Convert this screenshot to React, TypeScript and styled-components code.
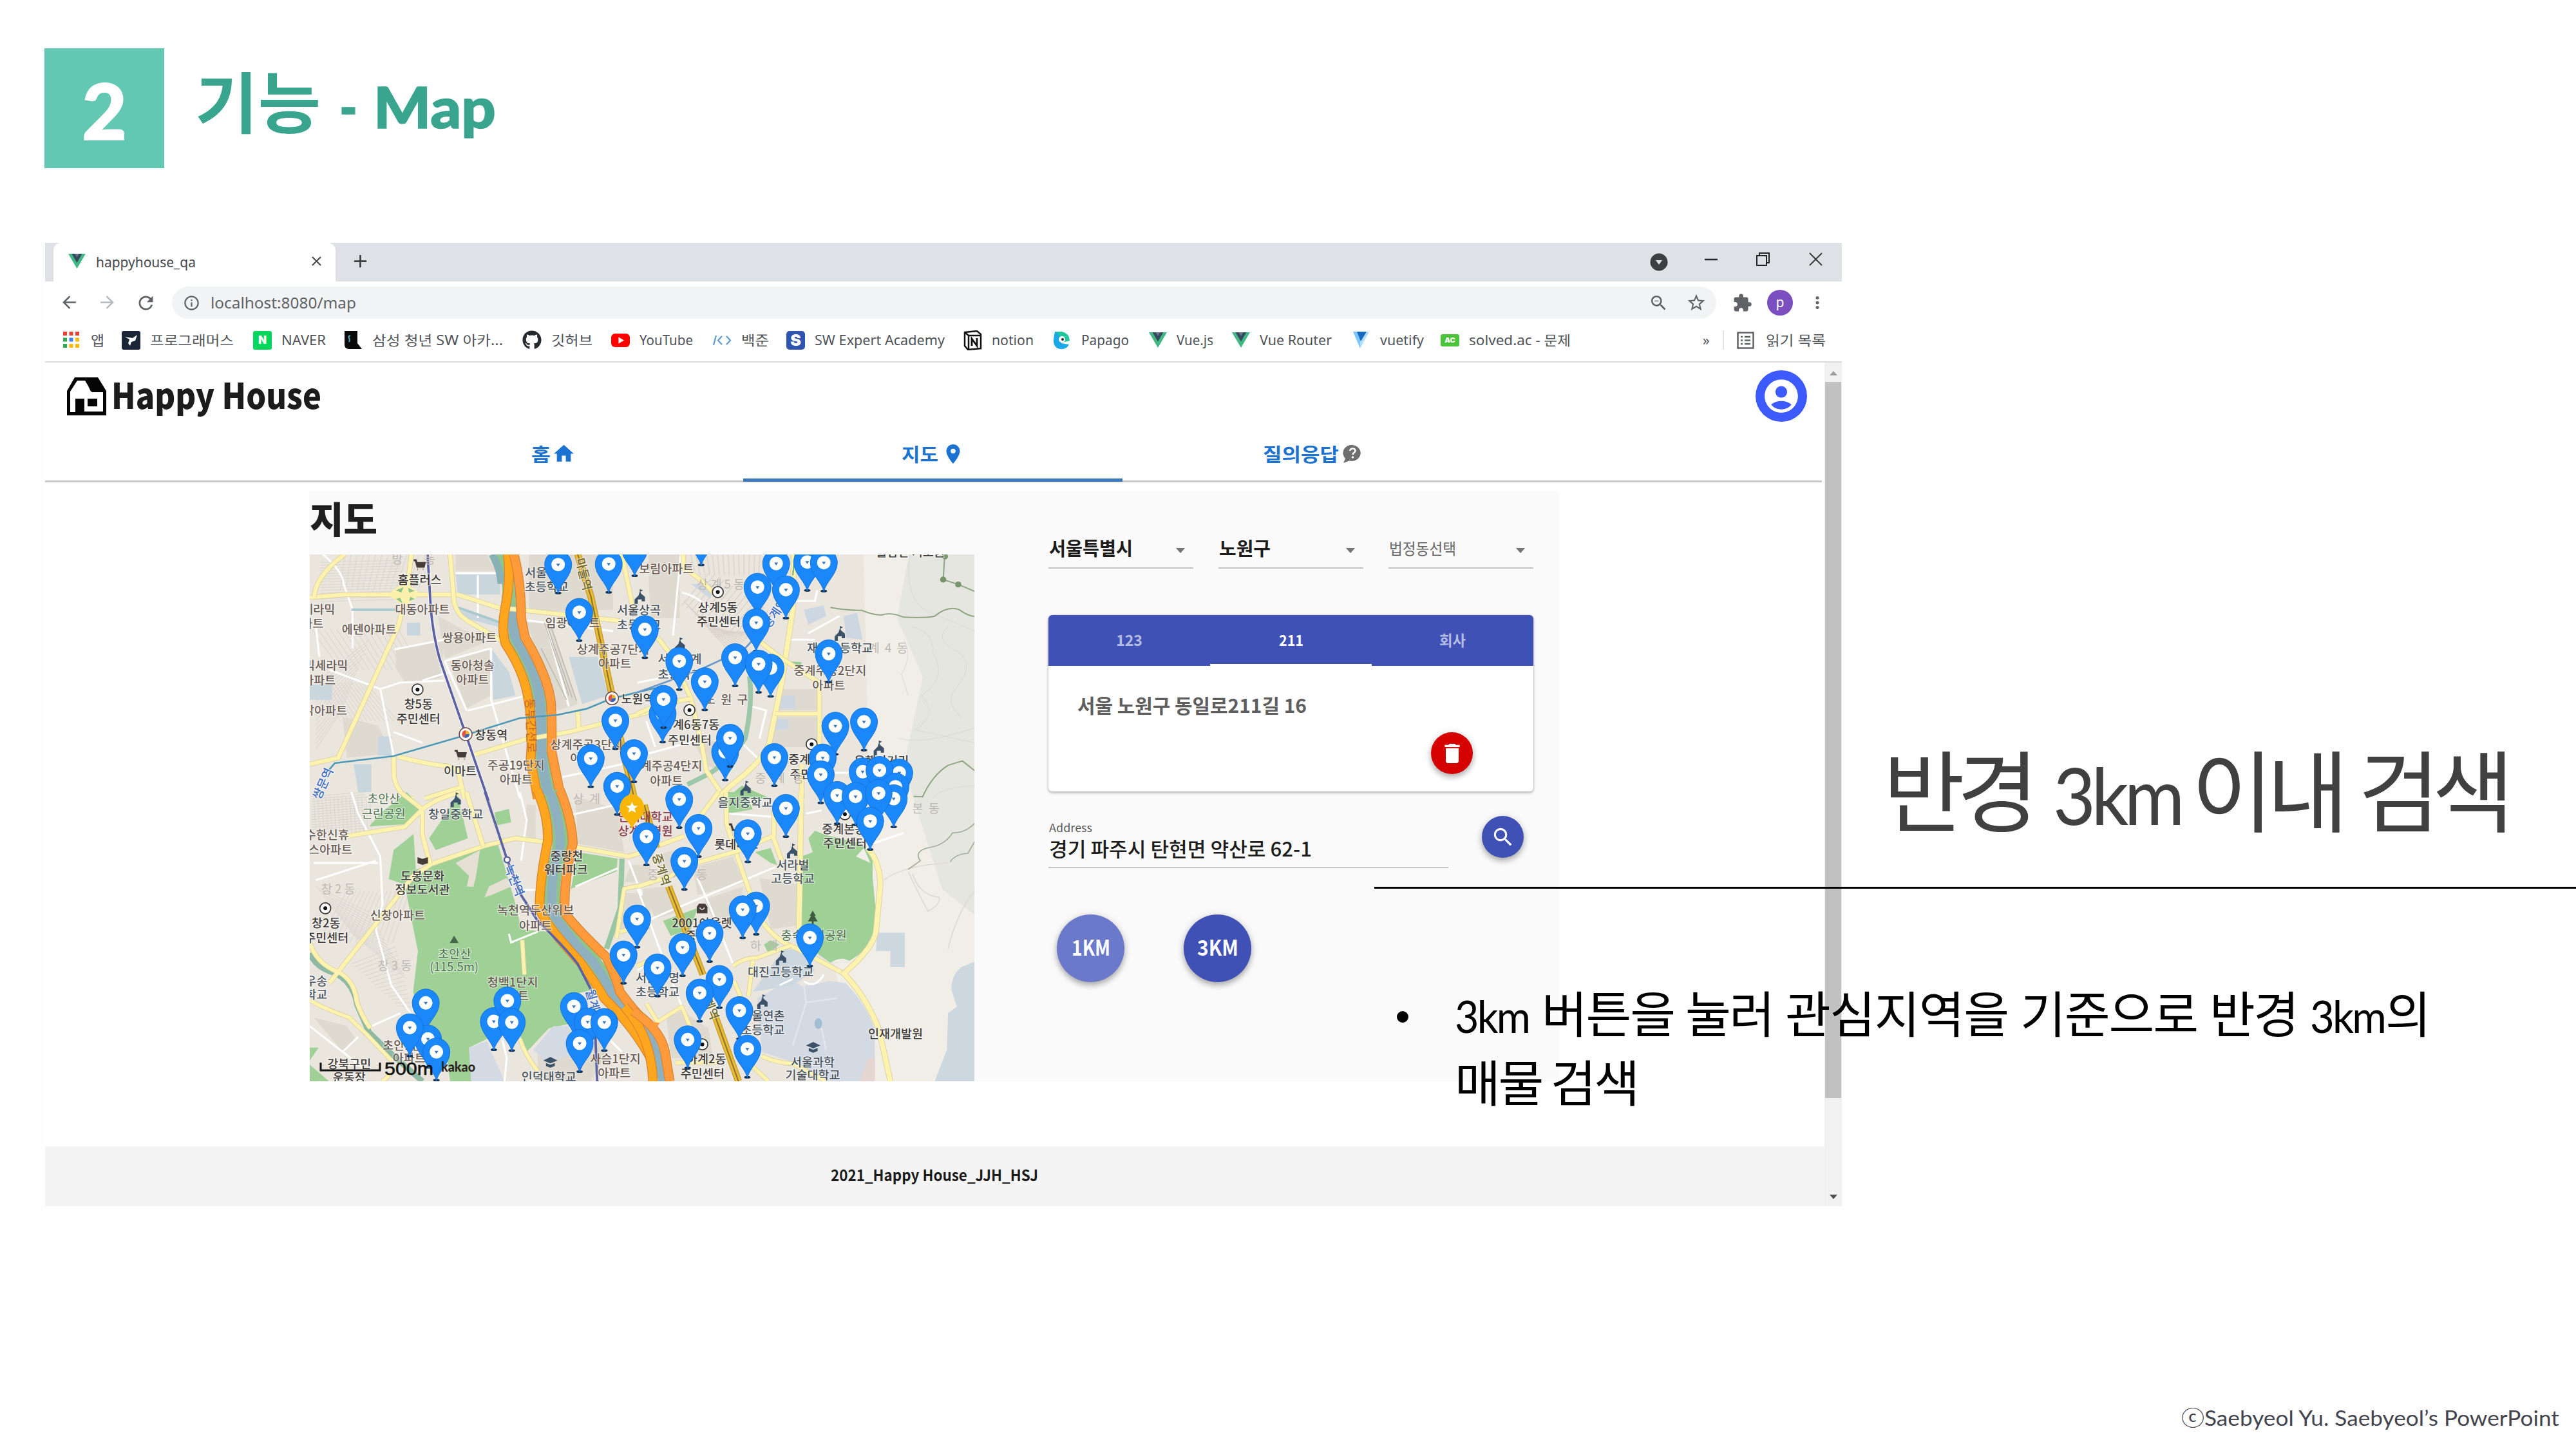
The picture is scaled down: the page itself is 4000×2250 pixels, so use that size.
import React, { useLayoutEffect, useRef, useState } from "react";
import styled, { createGlobalStyle, css } from "styled-components";
import {
  MdAccountCircle, MdAdd, MdArrowBack, MdArrowForward, MdClose, MdDelete, MdExtension, MdHome,
  MdInfoOutline, MdMoreVert, MdPlace, MdRefresh, MdSearch, MdStarBorder, MdZoomOut,
} from "react-icons/md";
import { FaGithub } from "react-icons/fa";

const KR = `"Noto Sans CJK KR", sans-serif`;
const LATIN = `Lato, "Noto Sans CJK KR", sans-serif`;
const CHROME = `"Noto Sans", "Noto Sans CJK KR", sans-serif`;
const INDIGO = "#3f51b5";

const GlobalStyle = createGlobalStyle`
  *, *::before, *::after { box-sizing: border-box; }
  html, body { margin: 0; padding: 0; background: #fff; }
  body { width: 4000px; height: 2250px; overflow: hidden; font-family: ${KR}; }
  svg { display: block; flex: none; }
`;

/* ---------- text that fills a given width ---------- */

const FitBox = styled.span<{ $w: number }>`
  display: inline-block;
  flex: none;
  width: ${(p) => p.$w}px;
  white-space: nowrap;
`;
const FitInner = styled.span`
  display: inline-block;
  white-space: pre;
  transform-origin: 0 50%;
`;

function Fit({ w, spaced, children }: { w: number; spaced?: boolean; children: string }) {
  const ref = useRef<HTMLSpanElement>(null);
  const [natural, setNatural] = useState(0);
  useLayoutEffect(() => {
    if (ref.current && !natural) setNatural(ref.current.getBoundingClientRect().width);
  }, [natural]);
  let style: React.CSSProperties = {};
  if (natural) {
    style = spaced
      ? { letterSpacing: `${(w - natural) / Math.max(1, children.length - 1)}px` }
      : { transform: `scaleX(${w / natural})` };
  }
  return (
    <FitBox $w={w}>
      <FitInner ref={ref} style={style}>{children}</FitInner>
    </FitBox>
  );
}

/* ---------- slide ---------- */

const Slide = styled.div`
  position: relative;
  width: 4000px;
  height: 2250px;
  overflow: hidden;
  background: #fefefe;
`;
const SlideHeader = styled.header`
  display: flex;
  height: 377px;
  padding: 75px 0 0 69px;
`;
const NumberBox = styled.div`
  display: flex;
  align-items: center;
  justify-content: center;
  width: 186px;
  height: 186px;
  padding-top: 5px;
  background: #62c8b3;
  color: #fff;
  font: 900 120px/1 ${LATIN};
  -webkit-text-stroke: 2px #fff;
`;
const SlideTitle = styled.h1`
  display: flex;
  align-items: baseline;
  height: 186px;
  margin: 0 0 0 48px;
  color: #3aa58f;
  font: 700 103px/1 ${KR};
  line-height: 160px;
`;
const TitleLatin = styled.span`
  display: flex;
  gap: 25px;
  margin-left: 29px;
  font: 900 88px/1 ${LATIN};
  -webkit-text-stroke: 1.5px #3aa58f;
`;

/* ---------- browser ---------- */

const Browser = styled.section`
  width: 2790px;
  height: 1496px;
  margin-left: 70px;
  display: flex;
  flex-direction: column;
  background: #fff;
`;
const TabStrip = styled.div`
  display: flex;
  align-items: center;
  height: 60px;
  padding-left: 13px;
  background: #dee1e6;
`;
const BrowserTab = styled.div`
  display: flex;
  align-items: center;
  width: 438px;
  height: 60px;
  padding: 0 17px 3px 23px;
  border-radius: 12px 12px 0 0;
  background: #fff;
  color: #45484c;
  font: 400 22px/1 ${CHROME};
`;
const TabLabel = styled.div`
  flex: 1;
  padding-left: 16px;
`;
const NewTab = styled.div`
  display: flex;
  flex: 1;
  padding: 0 0 3px 22px;
  color: #3c4043;
`;
const WindowControls = styled.div`
  display: flex;
  align-items: center;
  gap: 60px;
  padding: 0 29px 8px 0;

  svg:first-child { margin: 8px -3px 0 0; }
`;
const Toolbar = styled.div`
  display: flex;
  align-items: center;
  height: 66px;
  padding: 0 23px 0 22px;
  color: #5f6368;
`;
const NavIcons = styled.div`
  display: flex;
  gap: 28px;
  width: 175px;
`;
const Omnibox = styled.div`
  display: flex;
  align-items: center;
  width: 2398px;
  height: 50px;
  padding: 0 15px 0 17px;
  border-radius: 25px;
  background: #f1f3f4;
  font: 400 24px/1 ${CHROME};
`;
const Url = styled.div`
  flex: 1;
  padding-left: 16px;
  color: #5f6368;
`;
const StarGap = styled.div`
  padding-left: 27px;
`;
const ToolbarRight = styled.div`
  display: flex;
  flex: 1;
  align-items: center;
  justify-content: flex-end;
  gap: 23px;
`;
const Profile = styled.div`
  width: 40px;
  height: 40px;
  border-radius: 50%;
  background: #7b4fc0;
  color: #fff;
  font: 400 21px/38px ${CHROME};
  text-align: center;
`;
const Bookmarks = styled.div`
  display: grid;
  grid-template-columns: 92px 204px 141px 277px 138px 158px 114px 275px 139px 149px 129px 186px 138px 407px 31px 1fr;
  align-items: center;
  height: 60px;
  padding: 0 0 8px 27px;
  border-bottom: 2px solid #dcdcdc;
  color: #505357;
  font: 400 21px/30px ${CHROME};
`;
const Bookmark = styled.div`
  display: flex;
  align-items: center;
  gap: 15px;
`;
const ReadingList = styled(Bookmark)`
  gap: 18px;
  padding-left: 20px;
  border-left: 2px solid #e2e3e5;
`;
const Tile = styled.div<{ $bg: string; $r?: number; $h?: number; $fs?: number }>`
  width: 29px;
  height: ${(p) => p.$h ?? 29}px;
  border-radius: ${(p) => p.$r ?? 3}px;
  background: ${(p) => p.$bg};
  color: #fff;
  font: 900 ${(p) => p.$fs ?? 20}px/${(p) => p.$h ?? 29}px Inter, sans-serif;
  text-align: center;
`;

/* ---------- web page ---------- */

const Viewport = styled.div`
  display: flex;
  flex: 1;
`;
const Page = styled.div`
  display: flex;
  flex-direction: column;
  width: 2763px;
  background: #fff;
`;
const Scrollbar = styled.div`
  display: flex;
  flex-direction: column;
  align-items: center;
  width: 27px;
  background: #f1f1f1;
`;
const Arrow = styled.div<{ $down?: boolean }>`
  margin: ${(p) => (p.$down ? "150px 0 0" : "13px 0 10px")};
  border: 6px solid transparent;
  ${(p) =>
    p.$down
      ? css`border-top: 7px solid #505050; border-bottom: 0;`
      : css`border-bottom: 7px solid #a0a0a0; border-top: 0;`}
`;
const Thumb = styled.div`
  width: 25px;
  height: 1112px;
  background: #c1c1c1;
`;
const AppBar = styled.header`
  height: 186px;
  width: 2759px;
  border-bottom: 3px solid #c9c9c9;
`;
const LogoRow = styled.div`
  display: flex;
  align-items: center;
  justify-content: space-between;
  height: 94px;
  padding: 10px 23px 0 33px;
`;
const Logo = styled.div`
  display: flex;
  align-items: center;
  gap: 8px;
  color: #1c1c1c;
  font: 900 55px/60px ${KR};
`;
const LogoWord = styled.div`
  padding-bottom: 9px;
`;
const UserBadge = styled.div`
  display: flex;
  align-items: center;
  justify-content: center;
  width: 80px;
  height: 80px;
  border-radius: 50%;
  background: #3d5afe;
  color: #fff;
`;
const AppTabs = styled.nav`
  display: grid;
  grid-template-columns: repeat(3, 589px);
  height: 91px;
  padding-left: 495px;
  color: #1b72d0;
  font: 700 29px/1 ${KR};
`;
const AppTab = styled.div<{ $active?: boolean; $gap?: number }>`
  position: relative;
  display: flex;
  align-items: center;
  justify-content: center;
  gap: ${(p) => p.$gap ?? 5}px;
  padding-top: 9px;
  border-bottom: 5px solid ${(p) => (p.$active ? "#3a78bd" : "transparent")};
`;
const Panel = styled.main`
  display: flex;
  width: 1941px;
  height: 917px;
  margin: 13px 0 0 410px;
  background: #fafafa;
`;
const MapColumn = styled.div`
  width: 1033px;
  padding-left: 1px;
`;
const MapTitle = styled.h2`
  height: 99px;
  margin: 0;
  padding-top: 12px;
  color: #1f1f1f;
  font: 900 57px/58px ${KR};
`;
const Controls = styled.div`
  width: 753px;
  margin-left: 115px;
  padding-top: 68px;
`;
const SelectRow = styled.div`
  display: flex;
  justify-content: space-between;
`;
const Select = styled.div<{ $muted?: boolean }>`
  display: flex;
  align-items: center;
  justify-content: space-between;
  width: 225px;
  height: 53px;
  padding: 0 13px 10px 1px;
  border-bottom: 2px solid #c4c4c4;
  color: ${(p) => (p.$muted ? "#666" : "#1c1c1c")};
  font: ${(p) => (p.$muted ? "400 24px" : "700 29px")}/1 ${KR};
`;
const Caret = styled.div`
  margin-top: 9px;
  border: 7px solid transparent;
  border-top: 8px solid #757575;
  border-bottom: 0;
`;
const Card = styled.div`
  width: 753px;
  height: 274px;
  margin-top: 72px;
  border-radius: 6px;
  background: #fff;
  box-shadow: 0 2px 4px rgba(0, 0, 0, 0.3), 0 0 3px rgba(0, 0, 0, 0.12);
`;
const CardTabs = styled.div`
  display: grid;
  grid-template-columns: repeat(3, 1fr);
  height: 79px;
  border-radius: 6px 6px 0 0;
  background: ${INDIGO};
`;
const CardTab = styled.div<{ $active?: boolean }>`
  display: flex;
  align-items: center;
  justify-content: center;
  border-bottom: 3px solid ${(p) => (p.$active ? "#fff" : "transparent")};
  color: ${(p) => (p.$active ? "#fff" : "#b5bce3")};
  font: 700 23px/1 ${KR};
`;
const CardBody = styled.div`
  display: flex;
  flex-direction: column;
  padding: 42px 0 0 45px;
  color: #5e5e5e;
  font: 700 30px/36px ${KR};
`;
const RoundButton = styled.button<{ $size: number; $bg: string }>`
  display: flex;
  flex: none;
  align-items: center;
  justify-content: center;
  width: ${(p) => p.$size}px;
  height: ${(p) => p.$size}px;
  padding: 0;
  border: 0;
  border-radius: 50%;
  background: ${(p) => p.$bg};
  box-shadow: 0 5px 9px rgba(0, 0, 0, 0.26), 0 1px 14px rgba(0, 0, 0, 0.12);
  color: #fff;
  font: 700 33px/1 ${KR};
`;
const RadiusButton = styled(RoundButton)`
  padding-bottom: 5px;
`;
const DeleteSlot = styled.div`
  margin: 25px 0 0 549px;
`;
const AddressRow = styled.div`
  display: flex;
  justify-content: space-between;
  margin-top: 38px;
  padding-right: 15px;
`;
const AddressField = styled.div`
  display: flex;
  flex-direction: column;
  width: 621px;
  height: 81px;
  padding: 7px 0 0 1px;
  border-bottom: 2px solid #c4c4c4;
  color: #1c1c1c;
  font: 500 31px/46px ${KR};
`;
const FieldLabel = styled.label`
  height: 20px;
  color: #5a5a5a;
  font: 400 17px/22px ${KR};
`;
const RadiusRow = styled.div`
  display: flex;
  gap: 92px;
  padding: 72px 0 0 13px;
`;
const PageFooter = styled.footer`
  display: flex;
  align-items: center;
  height: 93px;
  margin-top: auto;
  padding: 0 0 5px 1220px;
  background: #f4f4f4;
  color: #1b1b1b;
  font: 700 24px/1 ${KR};
`;

/* ---------- notes laid over the browser ---------- */

const Notes = styled.aside`
  position: absolute;
  left: 2134px;
  top: 1130px;
  width: 1866px;
`;
const Heading = styled.h2`
  display: flex;
  align-items: baseline;
  height: 247px;
  margin: 0;
  padding-left: 790px;
  color: #404040;
  font: 400 138px/182px ${KR};
`;
const HeadPart = styled.span<{ $ml?: number; $latin?: boolean }>`
  margin-left: ${(p) => p.$ml ?? 0}px;
  ${(p) => p.$latin && css`font-family: ${LATIN}; font-size: 123px; letter-spacing: -7px;`}
`;
const Rule = styled.hr`
  height: 3px;
  margin: 0;
  border: 0;
  background: #000;
`;
const Bullets = styled.ul`
  display: flex;
  gap: 72px;
  margin: 0;
  padding: 137px 0 0 35px;
  list-style: none;
  color: #000;
  font: 400 77px/107px ${KR};
`;
const Dot = styled.li`
  width: 18px;
  height: 18px;
  margin-top: 53px;
  border-radius: 50%;
  background: #000;
`;
const BulletText = styled.li`
  display: flex;
  flex-direction: column;
`;
const Line = styled.div`
  display: flex;
  align-items: baseline;
  height: 107px;
`;
const Word = styled.span<{ $ml?: number; $latin?: boolean }>`
  margin-left: ${(p) => p.$ml ?? 0}px;
  ${(p) => p.$latin && css`font-family: ${LATIN}; font-size: 69px; letter-spacing: -3px;`}
`;
const Credit = styled.footer`
  position: absolute;
  left: 3387px;
  top: 2178px;
  display: flex;
  align-items: center;
  color: #44444f;
  font: 400 33px/46px ${LATIN};
`;

/* ---------- small drawings ---------- */

const VueMark = ({ size = 28 }: { size?: number }) => (
  <svg width={size} height={size} viewBox="0 0 28 28">
    <path d="M0 2h28L14 26z" fill="#41b883" />
    <path d="M5.6 2h16.8L14 16.5z" fill="#35495e" />
    <path d="M10.5 2h7L14 8z" fill="#fff" opacity=".25" />
  </svg>
);
const AppsMark = () => (
  <svg width="29" height="29" viewBox="0 0 29 29">
    {["#ea4335", "#ea4335", "#ea4335", "#34a853", "#4285f4", "#fbbc05", "#34a853", "#fbbc05", "#fbbc05"].map((c, i) => (
      <rect key={i} x={1 + (i % 3) * 9.5} y={1 + Math.floor(i / 3) * 9.5} width="6" height="6" fill={c} />
    ))}
  </svg>
);
const ProgrammersMark = () => (
  <svg width="29" height="29" viewBox="0 0 29 29">
    <rect width="29" height="29" rx="3" fill="#1b2538" />
    <path d="M5 9l12 2 7-5-3 9-6 2-2 6-3-4 2-6z" fill="#fff" />
  </svg>
);
const SsafyMark = () => (
  <svg width="29" height="29" viewBox="0 0 29 29">
    <path d="M1 0h20v19l7 9H8q-7 0-7-7z" fill="#0a0a0a" />
    <path d="M10 7q-4 1-2 4t0 6" stroke="#5ab" strokeWidth="2" fill="none" />
  </svg>
);
const YoutubeMark = () => (
  <svg width="29" height="29" viewBox="0 0 29 29">
    <rect y="4" width="29" height="21" rx="6" fill="#f00" />
    <path d="M11.500 9.500v10l8.500-5z" fill="#fff" />
  </svg>
);
const CodeMark = () => (
  <svg width="29" height="29" viewBox="0 0 29 29" fill="none" stroke="#5b9bd5" strokeWidth="2.200">
    <path d="M5 7L1 22M14 8l-6 6.500 6 6.500M21 8l6 6.500-6 6.500" />
  </svg>
);
const NotionMark = () => (
  <svg width="29" height="31" viewBox="0 0 29 31">
    <path d="M2 3l19-2 6 5v22l-20 2-5-6z" fill="#fff" stroke="#111" strokeWidth="2.500" />
    <path d="M2 3l6 5h19M8 8v21" stroke="#111" strokeWidth="2.500" fill="none" />
    <path d="M13 24V13l8 11V12" stroke="#111" strokeWidth="2.800" fill="none" />
  </svg>
);
const PapagoMark = () => (
  <svg width="29" height="29" viewBox="0 0 29 29">
    <path d="M3 1h11q11 2 12 14l-12 3z" fill="#1ec89b" />
    <path d="M3 1q8 3 7 10l3 8 12 2q-4 8-14 7Q0 26 1 12z" fill="#1aa9e8" />
    <circle cx="14" cy="13" r="5" fill="#fff" />
    <circle cx="15" cy="13" r="2" fill="#223" />
  </svg>
);
const VuetifyMark = () => (
  <svg width="29" height="29" viewBox="0 0 29 29">
    <path d="M2 1h11v26z" fill="#7bc6ff" />
    <path d="M13 1h14L13 27z" fill="#aeddff" />
    <path d="M8 1h15l-9 15z" fill="#1867c0" />
  </svg>
);
const ListMark = () => (
  <svg width="27" height="27" viewBox="0 0 27 27" fill="none" stroke="#5f6368" strokeWidth="2.500">
    <rect x="1.500" y="1.500" width="24" height="24" />
    <path d="M6 8h3M6 13.500h3M6 19h3M12 8h9M12 13.500h9M12 19h9" />
  </svg>
);
const HouseLogo = () => (
  <svg width="62" height="61" viewBox="0 0 62 61">
    <path d="M13 1h36l13 21v38H1V22z" fill="#050505" />
    <path d="M17 6L6 23v32h8V34h14v20h29V24H40L29 6z" fill="#fff" />
    <path d="M29 3h19l11 20H38z" fill="#050505" />
    <path d="M14 34h13v22H14z" fill="#050505" />
    <path d="M33 34h15v12H33z" fill="#050505" />
  </svg>
);
const HelpBubble = () => (
  <svg width="31" height="30" viewBox="0 0 31 30">
    <path d="M16 1a14 12.500 0 1 1-5 24.500L2 29l3-7A13 12.500 0 0 1 16 1z" fill="#6f6f6f" />
    <path d="M12 10q1-3.500 4.500-3.500t4 3.200q0 2-2.200 3.400-1.800 1-1.800 2.900" stroke="#fff" strokeWidth="2.600" fill="none" />
    <circle cx="16.500" cy="20" r="1.800" fill="#fff" />
  </svg>
);

/* ---------- map ---------- */

type Quad = "nw" | "ne" | "sw" | "se";
const ORIGIN: Record<Quad, [number, number]> = { nw: [-11, -101], ne: [509, -101], sw: [-11, 369], se: [509, 369] };
const SX = 1 / 2.904;
const SY = 1 / 3;
const at = (q: Quad, x: number, y: number): [number, number] => [x * SX + ORIGIN[q][0], y * SY + ORIGIN[q][1]];

const Sheet = ({ q, children }: { q: Quad; children: React.ReactNode }) => (
  <g transform={`matrix(${SX} 0 0 ${SY} ${ORIGIN[q][0]} ${ORIGIN[q][1]})`}>{children}</g>
);
const Road = ({ d, w = 18 }: { d: string; w?: number }) => (
  <g fill="none" strokeLinejoin="round">
    <path d={d} stroke="#d9cfa0" strokeWidth={w + 5} />
    <path d={d} stroke="#fdf3ae" strokeWidth={w} />
  </g>
);
const Highway = ({ d, c = "#ffa51e", w = 38 }: { d: string; c?: string; w?: number }) => (
  <g fill="none" strokeLinejoin="round">
    <path d={d} stroke="#d98636" strokeWidth={w + 6} />
    <path d={d} stroke={c} strokeWidth={w - 2} />
  </g>
);
const Lane = ({ d }: { d: string }) => (
  <g fill="none">
    <path d={d} stroke="#c99d2c" strokeWidth={32} />
    <path d={d} stroke="#e8bb38" strokeWidth={24} />
    <path d={d} stroke="#8d7426" strokeWidth={6} />
  </g>
);

const PINS: [Quad, number, number][] = [
  ["nw", 1497, 270], ["nw", 1152, 350], ["nw", 1380, 347], ["nw", 1247, 572], ["nw", 1543, 652],
  ["ne", 287, 220], ["ne", 625, 345], ["ne", 765, 338], ["ne", 840, 341], ["ne", 541, 455], ["ne", 669, 467],
  ["ne", 535, 620], ["ne", 440, 783], ["ne", 188, 800], ["ne", 303, 895], ["ne", 600, 832], ["ne", 546, 813],
  ["ne", 862, 765], ["ne", 113, 1045], ["ne", 117, 977], ["nw", 1410, 1076], ["nw", 1299, 1253],
  ["nw", 1418, 1382], ["nw", 1494, 1230], ["ne", 892, 1102], ["ne", 1021, 1082], ["ne", 395, 1222],
  ["ne", 417, 1158], ["ne", 617, 1248], ["ne", 835, 1250], ["ne", 826, 1328], ["ne", 1015, 1315],
  ["ne", 1180, 1320], ["ne", 1091, 1308], ["ne", 1163, 1385], ["ne", 1155, 1440], ["ne", 900, 1425],
  ["ne", 983, 1430], ["ne", 1087, 1415], ["se", 1049, 135],
  ["se", 188, 33], ["se", 669, 75], ["se", 275, 168], ["se", 497, 193], ["se", 211, 321], ["se", 535, 530],
  ["se", 474, 547], ["se", 325, 657], ["se", 203, 723], ["se", 777, 678], ["se", 90, 818], ["se", 369, 872],
  ["se", 280, 935], ["se", 459, 1017], ["se", 495, 1196], ["se", 226, 1153],
  ["sw", 1508, 590], ["sw", 1447, 758], ["sw", 555, 982], ["sw", 565, 1150], ["sw", 483, 1097],
  ["sw", 603, 1210], ["sw", 862, 1068], ["sw", 923, 972], ["sw", 943, 1072], ["sw", 1223, 998],
  ["sw", 1285, 1070], ["sw", 1360, 1072], ["sw", 1249, 1170],
];

const Pin = ({ x, y }: { x: number; y: number }) => (
  <g transform={`translate(${x} ${y})`}>
    <ellipse cx="0" cy="44" rx="5" ry="2" fill="#12304f" />
    <path d="M0 45C-3 30-21 18-21 0a21 21.500 0 0 1 42 0C21 18 3 30 0 45z" fill="#1a87fa" stroke="#1574d8" strokeWidth="1" />
    <circle r="10.500" fill="#fff" />
    <path d="M-3-1.500h6L0 3z" fill="#3b78b8" />
  </g>
);

type Kind = "apt" | "place" | "school" | "faint" | "red" | "blue" | "lane" | "green" | "highway";
const TONE: Record<Kind, string> = {
  apt: "#6a5d55", place: "#3d3a38", school: "#4b5560", faint: "#bdb9b4", red: "#8c3a4c", blue: "#3f6fc4",
  lane: "#6f6a30", green: "#4d7350", highway: "#c4692a",
};
const BARE: Kind[] = ["faint", "red", "highway"];
const LIGHT: Kind[] = ["faint", "green", "highway"];
const LABELS: [Quad, number, number, string, Kind, number?][] = [
  ["nw", 527, 420, "홈플러스", "place"], ["nw", 540, 558, "대동아파트", "apt"], ["nw", 300, 652, "에덴아파트", "apt"],
  ["nw", 752, 690, "쌍용아파트", "apt"], ["nw", 72, 558, "세라믹", "apt"], ["nw", 45, 625, "파트", "apt"],
  ["nw", 766, 820, "동아청솔", "apt"], ["nw", 766, 886, "아파트", "apt"], ["nw", 105, 820, "믹세라믹", "apt"],
  ["nw", 75, 888, "아파트", "apt"], ["nw", 102, 1028, "밝아파트", "apt"], ["nw", 522, 1000, "창5동", "place"],
  ["nw", 522, 1068, "주민센터", "place"], ["nw", 850, 1142, "창동역", "place"], ["nw", 710, 1310, "이마트", "place"],
  ["nw", 962, 1285, "주공19단지", "apt"], ["nw", 962, 1350, "아파트", "apt"], ["nw", 1052, 388, "서울", "school"],
  ["nw", 1100, 452, "초등학교", "school"], ["nw", 1217, 620, "임광아파트", "apt"], ["nw", 1516, 562, "서울상곡", "school"],
  ["nw", 1516, 630, "초등학교", "school"], ["nw", 1400, 745, "상계주공7단지", "apt"], ["nw", 1407, 810, "아파트", "apt"],
  ["nw", 1510, 975, "노원역", "place"], ["nw", 1280, 1188, "상계주공3단지", "apt"], ["nw", 1280, 1250, "아파트", "apt"],
  ["nw", 90, 1370, "쌍문역", "blue", -66], ["nw", 1268, 395, "마들역", "lane", 76], ["nw", 1030, 1100, "동부간선로", "highway", 88],
  ["nw", 500, 325, "방        동", "faint"],
  ["ne", 130, 370, "보림아파트", "apt"], ["ne", 375, 440, "상 계 5 동", "faint"], ["ne", 362, 548, "상계5동", "place"],
  ["ne", 365, 615, "주민센터", "place"], ["ne", 190, 790, "서울노계", "school"], ["ne", 190, 860, "초등학교", "school"],
  ["ne", 400, 978, "노  원  구", "apt"], ["ne", 240, 1095, "상계6동7동", "place"], ["ne", 235, 1167, "주민센터", "place"],
  ["ne", 1130, 738, "계  4  동", "faint"], ["ne", 912, 738, "재현중등학교", "school"], ["ne", 868, 843, "중계주공2단지", "apt"],
  ["ne", 862, 912, "아파트", "apt"], ["ne", 770, 1257, "중계1동", "place"], ["ne", 785, 1325, "주민센터", "place"],
  ["ne", 1100, 1262, "은행사거리", "place"], ["ne", 128, 1288, "상계주공4단지", "apt"], ["ne", 130, 1355, "아파트", "apt"],
  ["ne", 620, 575, "상계역", "blue", -55], ["ne", 1230, 292, "불암산 기도원", "place"], ["ne", 640, 1345, "중   계   동", "faint"],
  ["sw", 365, 30, "초안산", "green"], ["sw", 365, 98, "근린공원", "green"], ["sw", 690, 103, "창일중학교", "school"],
  ["sw", 110, 197, "수한신휴", "apt"], ["sw", 125, 268, "스아파트", "apt"], ["sw", 540, 390, "도봉문화", "place"],
  ["sw", 540, 453, "정보도서관", "place"], ["sw", 160, 450, "창 2 동", "faint"], ["sw", 105, 610, "창2동", "place"],
  ["sw", 108, 678, "주민센터", "place"], ["sw", 428, 573, "신창아파트", "apt"], ["sw", 685, 752, "초안산", "green"],
  ["sw", 683, 813, "(115.5m)", "green"], ["sw", 415, 808, "창 3 동", "faint"], ["sw", 955, 410, "녹천역", "blue", 68],
  ["sw", 1190, 298, "중랑천", "place"], ["sw", 1187, 360, "워터파크", "place"], ["sw", 1050, 550, "녹천역두산위브", "apt"],
  ["sw", 1050, 620, "아파트", "apt"], ["sw", 947, 885, "청백1단지", "apt"], ["sw", 945, 948, "아파트", "apt"],
  ["sw", 450, 1180, "초안1단", "apt"], ["sw", 480, 1240, "아파트", "apt"], ["sw", 210, 1265, "강북구민", "place"],
  ["sw", 210, 1330, "운동장", "place"], ["sw", 1110, 1325, "인덕대학교", "school"], ["sw", 1410, 1243, "사슴1단지", "apt"],
  ["sw", 1405, 1308, "아파트", "apt"], ["sw", 62, 880, "우송", "school"], ["sw", 62, 942, "학교", "school"],
  ["sw", 1280, 30, "상  계", "faint"], ["sw", 1308, 968, "월계", "blue", 75],
  ["se", 35, 115, "인제대학교", "red"], ["se", 35, 180, "상계백병원", "red"], ["se", 485, 48, "을지중학교", "school"],
  ["se", 445, 243, "롯데마트", "place"], ["se", 700, 340, "서라벌", "school"], ["se", 700, 403, "고등학교", "school"],
  ["se", 930, 170, "중계본동", "place"], ["se", 935, 237, "주민센터", "place"], ["se", 1300, 75, "본  동", "faint"],
  ["se", 180, 385, "중     계     동", "faint"], ["se", 290, 610, "2001아울렛", "place"], ["se", 290, 670, "중계점", "place"],
  ["se", 645, 838, "대진고등학교", "school"], ["se", 795, 665, "충숙근린공원", "green"], ["se", 90, 865, "서울수명", "school"],
  ["se", 90, 930, "초등학교", "school"], ["se", 565, 1040, "서울연촌", "school"], ["se", 565, 1107, "초등학교", "school"],
  ["se", 790, 1258, "서울과학", "school"], ["se", 790, 1318, "기술대학교", "school"], ["se", 1163, 1125, "인재개발원", "place"],
  ["se", 310, 1243, "하계2동", "place"], ["se", 293, 1310, "주민센터", "place"], ["se", 108, 360, "중계역", "lane", 72],
  ["se", 325, 985, "하계역", "lane", 70], ["se", 570, 715, "하  계", "faint"],
];

const Label = ({ x, y, text, kind, turn = 0 }: { x: number; y: number; text: string; kind: Kind; turn?: number }) => (
  <text
    transform={`translate(${x} ${y}) rotate(${turn})`}
    y="7"
    textAnchor="middle"
    fontFamily={KR}
    fontSize="18.500"
    fontWeight={LIGHT.includes(kind) ? 400 : 500}
    fill={TONE[kind]}
    stroke={BARE.includes(kind) ? "none" : "#fff"}
    strokeOpacity=".55"
    strokeWidth="2.500"
    paintOrder="stroke"
    style={{ whiteSpace: "pre" }}
  >
    {text}
  </text>
);

const OFFICES: [Quad, number, number][] = [
  ["nw", 518, 932], ["ne", 362, 478], ["ne", 234, 1028], ["ne", 785, 1187], ["sw", 102, 541], ["se", 935, 103], ["se", 292, 1175],
];
const SCHOOLS: [Quad, number, number][] = [
  ["nw", 1520, 500], ["ne", 190, 725], ["ne", 912, 672], ["ne", 1088, 1205], ["ne", 487, 1393], ["sw", 690, 37],
  ["se", 697, 275], ["se", 647, 773], ["se", 563, 978],
];
const STATIONS: [Quad, number, number][] = [["nw", 735, 1140], ["nw", 1395, 973]];

const GRID_LINES = Array.from({ length: 15 }, (_, i) => i);

function DistrictMap() {
  const [sx, sy] = at("sw", 1485, 72);
  const [lastX, lastY] = at("sw", 1550, 207);
  return (
    <svg width="1032" height="818" viewBox="0 0 1032 818">
      <rect width="1032" height="818" fill="#eae6de" />
      <path d="M860 0H1032V818H850L800 560 870 420z" fill="#f1eee7" />
      <path d="M930 0h102v560l-50-40-60-190 30-140-40-90z" fill="#e6e6e1" />

      <Sheet q="nw">
        <g stroke="#d9d5cd" strokeWidth="3" fill="none">
          {GRID_LINES.map((i) => (
            <path key={i} d={`M${190 + i * 28} 302L${170 + i * 25} 470M80 ${340 + i * 13}L440 ${330 + i * 13}M${40 + i * 28} 650L${170 + i * 26} 840M60 ${900 + i * 22}L${300 - i * 8} ${700 + i * 22}M${60 + i * 16} 900L${150 + i * 20} 1080`} />
          ))}
        </g>
        <path d="M420 745L640 705 620 880 540 890 460 900 420 830zM660 800L840 740 850 960 740 1020zM690 302H830L870 380H690zM610 590L720 650 830 710 640 790zM180 1060L340 1100 400 1230 200 1250zM1020 302H1400V560L1020 570zM1010 620h110l120 380-90 30z" fill="#dfdacf" />
        <path d="M690 395H890V490L700 490zM700 560L880 610 880 640 700 590zM850 740L930 850 960 960 860 980zM1200 780h130l50 180-120 40zM32 910h100v70H32zM470 620h60v60h-60zM230 1280h80v130h-60zM340 1150h60v90h-60z" fill="#c9d6de" />
        <g stroke="#fff" strokeWidth="9" fill="none">
          <path d="M90 302Q180 380 185 440L225 560 225 740M60 640L75 780M415 745L640 700M640 800L850 740M745 1030L990 965M790 400V600M690 390H890M640 800L740 1030M850 740L850 980 900 1160M350 930L410 1240M120 840L350 930 440 900 640 890M900 1160L980 1440M540 890L660 850M1170 1340L1440 1280M1010 610L1400 660M1100 640L1200 1010M410 1130L540 1180" />
        </g>
        <path d="M220 560H420M700 550L890 620" stroke="#a9c9cf" strokeWidth="12" fill="none" />
        <path d="M850 302Q900 380 900 480 890 560 895 700Q1020 860 1040 1000V1200L1070 1440H1150L1120 1300V1000L1000 690 975 480 930 302z" fill="#8fc48f" />
        <path d="M855 302Q895 380 895 440" stroke="#8ab1b3" strokeWidth="34" fill="none" />
        <path d="M955 560Q935 650 975 720 1050 840 1068 960 1080 1100 1075 1200 1085 1340 1115 1440" stroke="#8db0bf" strokeWidth="44" fill="none" />
        <g stroke="#b9b6af" strokeWidth="4" fill="none">
          <path d="M1090 620L1200 960M1105 640L1215 970M1075 740L1190 980M1120 640L1235 985" />
        </g>
        <Road d="M32 503L190 490H700L880 550 1150 580 1430 612" />
        <Road d="M190 302Q60 400 52 500" />
        <Road d="M665 302L680 490Q680 570 740 610L905 710" />
        <Road d="M490 302L470 480 430 640 160 1250 32 1280" />
        <Road d="M410 1240L412 1340Q430 1430 500 1440M430 1245Q560 1280 660 1290L700 1310 730 1440M550 1440L720 1385" />
        <Road d="M760 1240L1000 1165 1200 1130 1568 1035M1240 1030L1245 1110M1440 302L1490 560" />
        <path d="M385 490L460 425 530 490 460 545z" fill="#fbf0ac" />
        <path d="M420 470l35-15-10 25zM475 458l30 15-25 8zM420 510l30 20-10-25zM480 520l25-10-20-10z" fill="#8fc48f" />
        <Highway d="M925 302Q940 420 912 560 895 650 915 720 1000 850 1018 980 1040 1100 1028 1260L1060 1440" />
        <Highway d="M952 302Q985 430 985 600L1003 690Q1110 880 1120 1000 1125 1100 1122 1220L1165 1440" c="#ff9b3a" />
        <Lane d="M1240 302L1300 500 1395 960M1430 1150L1500 1460" />
        <path d="M563 302L578 560Q590 690 618 790L735 1140 838 1450" stroke="#fff" strokeWidth="16" fill="none" />
        <path d="M563 302L578 560Q590 690 618 790L735 1140 838 1450" stroke="#5b61a3" strokeWidth="11" fill="none" />
        <path d="M120 1305L145 1275 410 1242 700 1155 840 1110 980 1065 1150 1050 1280 1022 1390 975 1590 925" stroke="#4f9ab8" strokeWidth="8" fill="none" />
      </Sheet>

      <Sheet q="ne">
        <g stroke="#dbd3c9" strokeWidth="4" fill="none">
          {GRID_LINES.map((i) => (
            <path key={i} d={`M${200 + i * 22} ${540 + i * 12}L${330 + i * 20} ${380 + i * 14}M${210 + i * 10} ${560 + i * 12 - 40}L${420 + i * 9} ${760 - i * 8}M${240 + i * 24} 302L${260 + i * 22} 400`} />
          ))}
        </g>
        <path d="M50 302H190V600H90L50 420zM640 930H820V1030H625zM615 1060H815V1200H595zM250 1170L480 1180 380 1300 310 1290zM50 430L180 430 170 600 60 600z" fill="#dfdacf" />
        <path d="M750 560L840 540 850 590 770 630zM930 590L990 575 1015 700 940 690zM640 960h70v60h-70zM620 1070h60v50h-60zM240 440h90v70z" fill="#ccd7e2" />
        <g stroke="#dadad5" strokeWidth="3" fill="none">
          <path d="M1230 302Q1200 480 1290 560L1520 660M1230 640Q1340 660 1330 760 1400 880 1280 960 1360 1050 1250 1120L1520 1180M1400 640Q1330 700 1450 760 1520 820 1440 920 1380 990 1460 1060M1200 700Q1240 780 1190 860L1220 960M1180 1160Q1300 1190 1520 1110M1330 1440Q1360 1390 1520 1380" />
        </g>
        <g stroke="#fff" strokeWidth="9" fill="none">
          <path d="M195 302L160 680M200 480Q280 500 320 560M700 520H800L810 470M680 700H800M770 670L910 590M0 900L250 850M510 1010L580 1030 550 1160M50 1230L300 1160M470 1180L550 1260M880 1320L1000 1320M40 1080L80 1200" />
        </g>
        <path d="M505 870Q520 1000 485 1160 430 1250 330 1320L225 1375" stroke="#9cc7a8" strokeWidth="22" fill="none" />
        <path d="M670 800L740 805 730 850zM400 1440L470 1380 600 1440z" fill="#98cc92" />
        <Road d="M205 302L210 370Q270 400 340 480M90 690L150 770 240 970 290 1190 310 1310 375 1410" />
        <Road d="M705 302L700 560 650 900 592 1190Q560 1270 420 1380L360 1440" w={22} />
        <Road d="M620 1045H820M820 910V1200M540 700L640 780 820 900M740 1280V1440M0 1045L100 1000 240 975" />
        <path d="M0 945L280 840 480 745 530 690" stroke="#6b98c8" strokeWidth="8" fill="none" />
        <path d="M710 302L700 400" stroke="#6dac80" strokeWidth="6" />
        <g stroke="#8fa684" strokeWidth="6" fill="none">
          <path d="M870 550Q950 565 1010 563 1060 585 1100 585 1140 570 1200 595 1300 600 1340 590 1400 540 1450 560 1490 590 1520 592" />
          <path d="M1385 310L1378 420 1445 442 1520 475M1245 1430L1285 1432Q1330 1330 1400 1285L1465 1265 1520 1310" />
        </g>
        <g fill="#7a946c"><circle cx="1386" cy="312" r="14" /><circle cx="1378" cy="420" r="14" /><circle cx="1446" cy="443" r="14" /></g>
      </Sheet>

      <Sheet q="sw">
        <g stroke="#d9d5cd" strokeWidth="3" fill="none">
          {GRID_LINES.map((i) => (
            <path key={i} d={`M${50 + i * 18} ${20}L${60 + i * 18} 190M40 ${20 + i * 12}L280 ${i * 12}M${70 + i * 24} 700L${200 + i * 20} 460M${60 + i * 12} ${440 + i * 16}L${300 + i * 12} ${560 + i * 22}M${220 + i * 15} ${800 + i * 14}L${420 + i * 5} ${720 + i * 20}`} />
          ))}
        </g>
        <path d="M1010 60H1050V220L1000 200zM1230 20L1420 80 1450 280 1240 240zM1480 340H1568V420H1450zM1450 470H1568V640H1430zM1060 1180L1200 1100 1300 1120 1380 1200 1300 1347H1060zM50 1050L200 1090 240 1150 180 1210z" fill="#dfdacf" />
        <path d="M500 195L410 270 388 405 460 430 500 640 520 740 498 930 545 1100 640 1160 665 1347 760 1347 750 1190 830 1150 860 1120 980 1130 1010 1210 1110 1100 1200 1080 1230 940 1310 920 1240 800 1100 650 985 640 965 540 880 240 590 340 510 360z" fill="#9fd096" />
        <path d="M570 215L700 20 745 215 600 270zM300 160L350 100 470 0 540 80 460 150zM865 95L930 78 940 140 875 155zM1240 280L1420 310 1415 370 1210 450zM32 1190h40l-40 60zM32 1270l90 80h-90z" fill="#9fd096" />
        <path d="M690 330L800 270 780 400 770 440 740 440 750 390zM820 490L840 440 920 400 940 440 850 480z" fill="#e6dfd4" />
        <path d="M750 1190L830 1160 910 1347H760zM1040 1200L1130 1090 1200 1090 1200 1230 1100 1260z" fill="#d3dae3" />
        <g stroke="#fff" strokeWidth="9" fill="none">
          <path d="M220 0L250 100 350 300 360 520 330 640 400 900 500 1050M980 0L1010 130 985 320M50 330H340M330 320L60 410M1215 105L1410 60M1000 455H1060M1060 650L940 700 930 660M32 1090L180 1210 250 1140M310 1090L440 1030M180 1210L280 1290M900 1150L920 1240 910 1347M1230 440L1420 355M1470 320L1530 480M1380 1150L1440 1210" />
        </g>
        <path d="M32 750Q60 820 150 845 230 890 245 990L300 1120 400 1220 540 1347" stroke="#8db9a3" strokeWidth="26" fill="none" />
        <path d="M1440 310L1432 540 1370 730" stroke="#97c6a2" strokeWidth="24" fill="none" />
        <Road d="M32 700Q60 800 165 840 235 880 245 980 270 1050 305 1100M120 890L500 390 580 335 820 250 960 215 1110 235 1470 300 1568 268" />
        <Road d="M200 205L460 162 540 80 440 0M540 80Q600 30 710 0M540 90L540 200 575 335M738 0L815 255" />
        <Road d="M32 970Q100 1010 210 1050L290 1130 400 1250M990 690L1000 850M980 1150Q1000 1220 1060 1300M1415 680L1450 450 1568 425M1430 650L1568 620M360 1347L400 1310" w={16} />
        <path d="M1115 0Q1170 140 1160 260 1120 380 1125 560 1200 680 1310 790 1370 880 1400 950L1568 1150" stroke="#8fc48f" strokeWidth="70" fill="none" />
        <path d="M1115 0Q1165 140 1160 260 1115 380 1125 560 1200 680 1310 790 1370 880 1400 950L1580 1150" stroke="#8fb0be" strokeWidth="40" fill="none" />
        <Highway d="M1056 -10Q1110 110 1105 230 1070 400 1068 540 1080 600 1250 790 1330 900 1360 960 1500 1100 1580 1260" />
        <Highway d="M1160 -10Q1215 130 1218 240 1180 380 1180 560 1220 620 1370 770 1410 850 1430 930 1500 1030 1600 1130" c="#ff9b3a" />
        <path d="M822 0L922 315 985 480 1060 600Q1180 720 1240 800L1300 920M1315 1010L1328 1347" stroke="#5b61a3" strokeWidth="11" fill="none" />
        <circle cx="922" cy="315" r="13" fill="#fff" stroke="#5b61a3" strokeWidth="7" />
      </Sheet>

      <Sheet q="se">
        <path d="M60 300L200 260 240 380 130 400zM250 350L430 300 480 420 270 480zM550 400L720 430 720 620 600 640zM20 450L130 440 180 560 80 590zM300 500L480 440 420 640 360 640zM130 1050L200 1020 320 1100 340 1240 150 1240z" fill="#dfdacf" />
        <path d="M740 300L790 280 770 215 800 180 850 200 1010 240 1060 300 1060 400 1075 560 1070 670Q1060 720 950 790L870 795 740 700zM400 0H480L520 80 410 100zM530 280L600 260 630 340 600 330zM115 600L270 540 240 640 150 670zM570 710L600 690 640 710 590 750z" fill="#9fd096" />
        <path d="M985 300L1020 260 1050 330zM1060 370l20 15-15 25zM870 795Q920 760 960 790z" fill="#f1eee7" />
        <path d="M540 960L700 870 740 905 870 880 940 890Q1040 1000 1070 1110V1347H870L680 1250 560 1210z" fill="#d3dae3" />
        <path d="M1520 790L1460 815Q1415 850 1415 920L1440 1000 1400 1030 1395 1200 1340 1347H1520zM1080 655H1205V815H1140V740H1075zM520 930L660 730 740 740 800 830 700 900z" fill="#ccd7df" />
        <ellipse cx="815" cy="1078" rx="17" ry="25" fill="#a3bed4" />
        <path d="M1040 1240H1070V1347H1000z" fill="#e6d6d2" />
        <g stroke="#fff" strokeWidth="9" fill="none">
          <path d="M0 620L130 560 620 350M270 400L330 540 430 800M0 450L110 760 200 1000M410 100L610 115M760 100L830 85M640 900L700 870M1060 240L1200 190M750 880Q800 920 840 850M0 830L60 790" />
        </g>
        <path d="M750 900L760 980 700 1180M760 980L900 960M830 1100L850 1200" stroke="#e3e7ec" strokeWidth="7" fill="none" />
        <g stroke="#dddad4" strokeWidth="5" fill="none">
          <path d="M1110 410Q1200 340 1400 330M1220 370Q1270 480 1310 555 1370 520 1360 490 1270 480 1240 380M1400 730Q1440 560 1520 460" />
        </g>
        <path d="M1220 360L1275 320Q1240 270 1330 255 1390 240 1420 190 1480 190 1520 145M1410 325Q1430 290 1490 285L1520 230" stroke="#9fae97" strokeWidth="5" fill="none" />
        <Road d="M738 0L728 640" w={22} />
        <Road d="M398 0L402 150 450 300 500 450 560 600Q620 690 710 725L930 845" />
        <Road d="M1040 265Q1090 320 1095 430L1075 650Q1060 730 930 845 1030 950 1090 1110L1140 1347" w={22} />
        <Road d="M270 130L365 0M0 440L150 390 280 325 450 275 610 205 650 320M90 250L210 205M615 80V205" />
        <Road d="M430 810Q480 770 540 772L690 715M520 785L500 950M435 880L500 1040M40 985L90 1070 200 1000 240 1100M560 1230Q620 1260 700 1265L850 1347M500 1260L590 1347M170 1260H360M0 810L60 780" w={16} />
        <path d="M0 1060Q90 1150 110 1347" stroke="#8fb0be" strokeWidth="34" fill="none" />
        <Highway d="M-60 1000Q60 1130 70 1347" />
        <Highway d="M-20 1020Q110 1110 125 1220L145 1347" c="#ff9b3a" />
        <path d="M80 1110l20-35-40-5z" fill="#ff9b3a" />
        <Lane d="M30 60L85 260M140 440L295 850M345 1030L455 1347" />
      </Sheet>

      {LABELS.map(([q, x, y, text, kind, turn]) => {
        const [mx, my] = at(q, x, y);
        return <Label key={`${q}${x}-${y}`} x={mx} y={my} text={text} kind={kind} turn={turn} />;
      })}
      {STATIONS.map(([q, x, y]) => {
        const [mx, my] = at(q, x, y);
        return (
          <g key={`${x}`} transform={`translate(${mx} ${my})`}>
            <circle r="10" fill="#fff" stroke="#6b4a4a" strokeWidth="1.500" />
            <path d="M0-6A6 6 0 0 1 6 0H0z" fill="#f0b429" />
            <path d="M6 0A6 6 0 0 1-3 5L0 0z" fill="#3a62b8" />
            <path d="M-3 5A6 6 0 0 1 0-6V0z" fill="#e2533f" />
          </g>
        );
      })}
      {OFFICES.map(([q, x, y]) => {
        const [mx, my] = at(q, x, y);
        return (
          <g key={`${x}`} transform={`translate(${mx} ${my})`}>
            <circle r="8.500" fill="#fff" stroke="#3a3a3a" strokeWidth="1.800" />
            <circle r="3" fill="#111" />
          </g>
        );
      })}
      {SCHOOLS.map(([q, x, y]) => {
        const [mx, my] = at(q, x, y);
        return (
          <path key={`${x}`} transform={`translate(${mx} ${my})`} d="M0-8v-4l5 2-4 2 1 3 6 5v7H3V4h-6v7h-5V4l6-6z" fill="#3c5268" />
        );
      })}
      <Sheet q="nw">
        <path d="M500 330h10l8 30h28l5-22M518 372h2M542 372h2M685 1218h10l8 26h28l5-20M702 1256h2M728 1256h2" stroke="#463d38" strokeWidth="9" fill="none" />
        <path d="M510 338h38l-4 20h-30zM695 1224h38l-4 20h-30z" fill="#463d38" />
      </Sheet>
      <Sheet q="sw">
        <path d="M518 303l22 8 25-8v28l-25 8-22-8z" fill="#463d38" />
        <path d="M683 668l20 35h-40z" fill="#47684a" />
        <path d="M1085 1250l32-16 32 16-32 14zM1097 1262l20 8 20-8v14l-20 8-20-8z" fill="#3c5268" />
      </Sheet>
      <Sheet q="se">
        <path d="M760 1180l32-16 32 16-32 14zM772 1192l20 8 20-8v14l-20 8-20-8z" fill="#3c5268" />
        <path d="M790 552l14 25h-7l15 25h-18v15h-8v-15h-18l15-25h-7z" fill="#3f5a42" />
        <path d="M267 535l10-15h28l10 15v30h-48z" fill="#463d38" />
        <path d="M280 538q11 18 22 0" stroke="#fff" strokeWidth="4" fill="none" />
        <path d="M412 150h10l8 26h26" stroke="#463d38" strokeWidth="9" fill="none" />
      </Sheet>

      {PINS.map(([q, x, y]) => {
        const [mx, my] = at(q, x, y);
        return <Pin key={`${q}${x}-${y}`} x={mx} y={my} />;
      })}
      <g transform={`translate(${sx} ${sy})`}>
        <path d="M0 33Q-3 24-14 15-20 8-19-2-16-18 0-21 16-18 19-2 20 8 14 15 3 24 0 33z" fill="#f9b606" />
        <path d="M0-9l2.500 6 6.500.5-5 4 2 6.500L0 4.500-6 8l2-6.500-5-4 6.500-.5z" fill="#fff" />
      </g>
      <Pin x={lastX} y={lastY} />

      <path d="M17 789v12h92v-12" stroke="#111" strokeWidth="3" fill="none" />
      <text x="116" y="808" fontFamily="Liberation Sans, sans-serif" fontSize="28" fill="#111" stroke="#111" strokeWidth=".6" textLength="76" lengthAdjust="spacingAndGlyphs">500m</text>
      <text x="204" y="803" fontFamily="Lato, sans-serif" fontWeight="900" fontSize="20" fill="#2c2420" textLength="53" lengthAdjust="spacingAndGlyphs">kakao</text>
    </svg>
  );
}

/* ---------- sections ---------- */

const BrowserChrome = () => (
  <>
    <TabStrip>
      <BrowserTab>
        <VueMark size={27} />
        <TabLabel><Fit w={155}>happyhouse_qa</Fit></TabLabel>
        <MdClose size={25} />
      </BrowserTab>
      <NewTab><MdAdd size={33} /></NewTab>
      <WindowControls>
        <svg width="28" height="28" viewBox="0 0 28 28">
          <circle cx="14" cy="14" r="13.500" fill="#3c4043" />
          <path d="M9 11h10l-5 7z" fill="#dee1e6" />
        </svg>
        <svg width="20" height="20" viewBox="0 0 20 20"><path d="M0 10h20" stroke="#222" strokeWidth="2.500" /></svg>
        <svg width="22" height="22" viewBox="0 0 22 22" fill="none" stroke="#222" strokeWidth="2"><path d="M1 5h15v15H1zM5 5V1h15v15h-4" /></svg>
        <svg width="22" height="22" viewBox="0 0 22 22" stroke="#333" strokeWidth="1.800"><path d="M1 1l19 19M20 1L1 20" /></svg>
      </WindowControls>
    </TabStrip>
    <Toolbar>
      <NavIcons>
        <MdArrowBack size={31} />
        <MdArrowForward size={31} color="#b9bbbe" />
        <MdRefresh size={33} />
      </NavIcons>
      <Omnibox>
        <MdInfoOutline size={27} />
        <Url><Fit w={226}>localhost:8080/map</Fit></Url>
        <MdZoomOut size={31} />
        <StarGap><MdStarBorder size={32} /></StarGap>
      </Omnibox>
      <ToolbarRight>
        <MdExtension size={31} />
        <Profile>p</Profile>
        <MdMoreVert size={30} />
      </ToolbarRight>
    </Toolbar>
    <Bookmarks>
      <Bookmark><AppsMark /><Fit w={21}>앱</Fit></Bookmark>
      <Bookmark><ProgrammersMark /><Fit w={130}>프로그래머스</Fit></Bookmark>
      <Bookmark><Tile $bg="#03d65c" $fs={17}>N</Tile><Fit w={69}>NAVER</Fit></Bookmark>
      <Bookmark><SsafyMark /><Fit w={203}>삼성 청년 SW 아카...</Fit></Bookmark>
      <Bookmark><FaGithub size={30} color="#24292e" /><Fit w={64}>깃허브</Fit></Bookmark>
      <Bookmark><YoutubeMark /><Fit w={83}>YouTube</Fit></Bookmark>
      <Bookmark><CodeMark /><Fit w={43}>백준</Fit></Bookmark>
      <Bookmark><Tile $bg="#2f55b0" $r={5} $fs={25}>S</Tile><Fit w={202}>SW Expert Academy</Fit></Bookmark>
      <Bookmark><NotionMark /><Fit w={65}>notion</Fit></Bookmark>
      <Bookmark><PapagoMark /><Fit w={74}>Papago</Fit></Bookmark>
      <Bookmark><VueMark /><Fit w={57}>Vue.js</Fit></Bookmark>
      <Bookmark><VueMark /><Fit w={112}>Vue Router</Fit></Bookmark>
      <Bookmark><VuetifyMark /><Fit w={68}>vuetify</Fit></Bookmark>
      <Bookmark><Tile $bg="#4cc43a" $h={19} $fs={11}>AC</Tile><Fit w={158}>solved.ac - 문제</Fit></Bookmark>
      <span>»</span>
      <ReadingList><ListMark /><Fit w={93}>읽기 목록</Fit></ReadingList>
    </Bookmarks>
  </>
);

const HouseSearch = () => (
  <Controls>
    <SelectRow>
      <Select><Fit w={130}>서울특별시</Fit><Caret /></Select>
      <Select><Fit w={80}>노원구</Fit><Caret /></Select>
      <Select $muted><Fit w={104}>법정동선택</Fit><Caret /></Select>
    </SelectRow>
    <Card>
      <CardTabs>
        <CardTab><Fit w={41}>123</Fit></CardTab>
        <CardTab $active><Fit w={38}>211</Fit></CardTab>
        <CardTab><Fit w={41}>회사</Fit></CardTab>
      </CardTabs>
      <CardBody>
        <Fit w={356}>서울 노원구 동일로211길 16</Fit>
        <DeleteSlot>
          <RoundButton $size={65} $bg="#d50000"><MdDelete size={40} /></RoundButton>
        </DeleteSlot>
      </CardBody>
    </Card>
    <AddressRow>
      <AddressField>
        <FieldLabel><Fit w={67}>Address</Fit></FieldLabel>
        <Fit w={408}>경기 파주시 탄현면 약산로 62-1</Fit>
      </AddressField>
      <RoundButton $size={65} $bg={INDIGO}><MdSearch size={38} /></RoundButton>
    </AddressRow>
    <RadiusRow>
      <RadiusButton $size={105} $bg="#6a79c9"><Fit w={60}>1KM</Fit></RadiusButton>
      <RadiusButton $size={105} $bg={INDIGO}><Fit w={64}>3KM</Fit></RadiusButton>
    </RadiusRow>
  </Controls>
);

export default function App() {
  return (
    <>
      <GlobalStyle />
      <Slide>
        <SlideHeader>
          <NumberBox>2</NumberBox>
          <SlideTitle>
            <Fit w={195}>기능</Fit>
            <TitleLatin><Fit w={28}>-</Fit><Fit w={190}>Map</Fit></TitleLatin>
          </SlideTitle>
        </SlideHeader>
        <Browser>
          <BrowserChrome />
          <Viewport>
            <Page>
              <AppBar>
                <LogoRow>
                  <Logo><HouseLogo /><LogoWord><Fit w={326}>Happy House</Fit></LogoWord></Logo>
                  <UserBadge><MdAccountCircle size={62} /></UserBadge>
                </LogoRow>
                <AppTabs>
                  <AppTab $gap={2}><Fit w={30}>홈</Fit><MdHome size={37} /></AppTab>
                  <AppTab $active><Fit w={57}>지도</Fit><MdPlace size={36} /></AppTab>
                  <AppTab><Fit w={118}>질의응답</Fit><HelpBubble /></AppTab>
                </AppTabs>
              </AppBar>
              <Panel>
                <MapColumn>
                  <MapTitle><Fit w={105}>지도</Fit></MapTitle>
                  <DistrictMap />
                </MapColumn>
                <HouseSearch />
              </Panel>
              <PageFooter><Fit w={322}>2021_Happy House_JJH_HSJ</Fit></PageFooter>
            </Page>
            <Scrollbar><Arrow /><Thumb /><Arrow $down /></Scrollbar>
          </Viewport>
        </Browser>
        <Notes>
          <Heading>
            <HeadPart><Fit w={242} spaced>반경</Fit></HeadPart>
            <HeadPart $latin $ml={22}><Fit w={198}>3km</Fit></HeadPart>
            <HeadPart $ml={17}><Fit w={244} spaced>이내</Fit></HeadPart>
            <HeadPart $ml={15}><Fit w={242} spaced>검색</Fit></HeadPart>
          </Heading>
          <Rule />
          <Bullets>
            <Dot />
            <BulletText>
              <Line>
                <Word $latin><Fit w={115}>3km</Fit></Word>
                <Word $ml={20}><Fit w={208} spaced>버튼을</Fit></Word>
                <Word $ml={15}><Fit w={139} spaced>눌러</Fit></Word>
                <Word $ml={16}><Fit w={348} spaced>관심지역을</Fit></Word>
                <Word $ml={17}><Fit w={277} spaced>기준으로</Fit></Word>
                <Word $ml={17}><Fit w={139} spaced>반경</Fit></Word>
                <Word $latin $ml={17}><Fit w={116}>3km</Fit></Word>
                <Word $ml={1}><Fit w={70} spaced>의</Fit></Word>
              </Line>
              <Line><Fit w={287} spaced>매물 검색</Fit></Line>
            </BulletText>
          </Bullets>
        </Notes>
        <Credit><Fit w={36}>ⓒ</Fit><Fit w={551}>Saebyeol Yu. Saebyeol’s PowerPoint</Fit></Credit>
      </Slide>
    </>
  );
}
